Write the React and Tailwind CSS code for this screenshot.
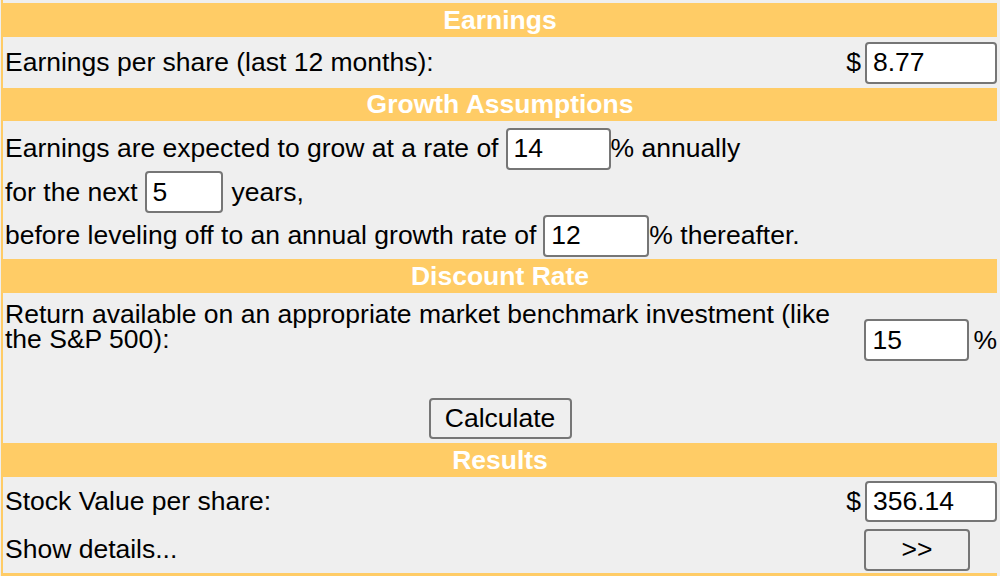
import React from "react";

const font = { fontFamily: '"Liberation Sans", Arial, sans-serif' };

function Header({ children, className = "" }) {
  return (
    <div className={"bg-[#ffcc66] text-white font-bold text-[26.5px] leading-none flex items-center justify-center " + className}>
      {children}
    </div>
  );
}

function Field({ value, className = "" }) {
  return (
    <div className={"bg-white border-2 border-[#767676] rounded-[4px] flex items-center pl-[6px] text-[26.5px] leading-none text-black " + className}>
      {value}
    </div>
  );
}

export default function App() {
  return (
    <div style={font} className="w-[1000px] h-[576px] bg-[#efefef] overflow-hidden text-black">
      <div className="ml-[1px] mr-[3px] h-[576px] border-l-2 border-[#ffcc66] pt-[3px] flex flex-col">
        <Header className="h-[34px]">Earnings</Header>
        <div className="h-[51px] flex items-center text-[26.5px] leading-none">
          <div className="flex-1 pl-[2px]">Earnings per share (last 12 months):</div>
          <div className="flex items-center w-[152px] justify-end gap-[4px]">
            <span>$</span>
            <Field value="8.77" className="w-[132px] h-[42px]" />
          </div>
        </div>
        <Header className="h-[33px]">Growth Assumptions</Header>
        <div className="h-[138px] pt-[6px] flex flex-col gap-[1px] text-[26.5px] leading-none pl-[2px]">
          <div className="flex items-center h-[43px]">
            <span>Earnings are expected to grow at a rate of</span>
            <Field value="14" className="w-[105px] h-[42px] ml-[7px]" />
            <span>% annually</span>
          </div>
          <div className="flex items-center h-[42px]">
            <span>for the next</span>
            <Field value="5" className="w-[78px] h-[42px] ml-[7px] mr-[9px]" />
            <span>years,</span>
          </div>
          <div className="flex items-center h-[43px]">
            <span>before leveling off to an annual growth rate of</span>
            <Field value="12" className="w-[106px] h-[42px] ml-[7px]" />
            <span>% thereafter.</span>
          </div>
        </div>
        <Header className="h-[34px]">Discount Rate</Header>
        <div className="h-[72px] flex text-[26.5px] leading-[25px]">
          <div className="w-[838px] pl-[2px] pt-[9px]">
            Return available on an appropriate market benchmark investment (like the S&amp;P 500):
          </div>
          <div className="flex items-start pt-[26px] gap-[4px] ml-[25px]">
            <Field value="15" className="w-[105px] h-[42px]" />
            <span className="leading-[42px]">%</span>
          </div>
        </div>
        <div className="h-[78px] flex items-start justify-center pt-[33px]">
          <button className="w-[143px] h-[41px] bg-[#efefef] border-2 border-[#767676] rounded-[4px] text-[26.5px] leading-none text-black" style={font}>
            Calculate
          </button>
        </div>
        <Header className="h-[34px]">Results</Header>
        <div className="h-[49px] flex items-center text-[26.5px] leading-none">
          <div className="flex-1 pl-[2px]">Stock Value per share:</div>
          <div className="flex items-center w-[152px] justify-end gap-[4px]">
            <span>$</span>
            <Field value="356.14" className="w-[132px] h-[41px]" />
          </div>
        </div>
        <div className="h-[47px] flex items-center text-[26.5px] leading-none">
          <div className="flex-1 pl-[2px]">Show details...</div>
          <div className="w-[152px] flex items-center pl-[19px]">
            <button className="w-[106px] h-[42px] bg-[#efefef] border-2 border-[#767676] rounded-[4px] text-[26.5px] leading-none text-black" style={font}>
              &gt;&gt;
            </button>
          </div>
        </div>
        <div className="h-[3px] bg-[#ffcc66]" />
      </div>
    </div>
  );
}
